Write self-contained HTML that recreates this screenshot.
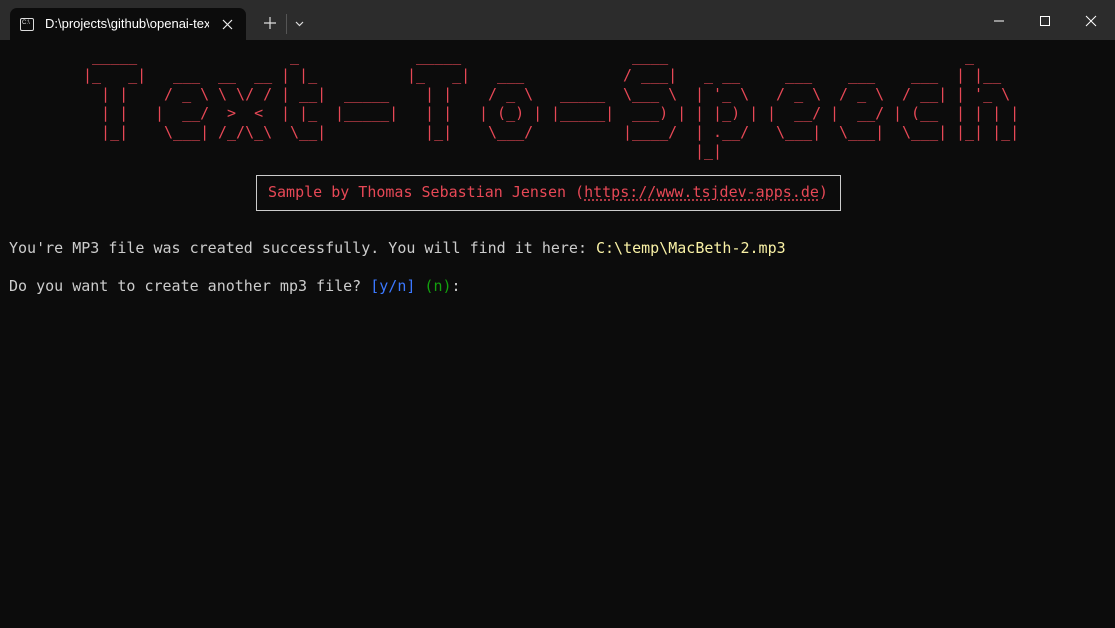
<!DOCTYPE html>
<html><head><meta charset="utf-8"><style>
body{margin:0;width:1115px;height:628px;background:#0c0c0c;overflow:hidden;position:relative;font-family:"Liberation Mono",monospace;}
.tb{position:absolute;left:0;top:0;width:1115px;height:40px;background:#2c2c2c;}
.tab{position:absolute;left:10px;top:8px;width:236px;height:32px;background:#0c0c0c;border-radius:7px 7px 0 0;}
.tab .t{position:absolute;left:35px;top:8px;font:13px "Liberation Sans",sans-serif;color:#fff;white-space:nowrap;width:164px;overflow:hidden;}
.ic{position:absolute;left:10px;top:10px;width:12px;height:11px;border:1px solid #ddd;border-radius:2px;}
.ic:after{content:"C:\\";position:absolute;left:1px;top:1px;font:6px "Liberation Sans";color:#ddd}
pre{margin:0;position:absolute;font-size:15px;line-height:19px;white-space:pre;}
.r{color:#e74856}
.a{color:#e74856;top:47px}
.g{color:#cccccc}
</style></head><body>
<div class="tb">
<div class="tab"><div class="ic"></div><div class="t">D:\projects\github\openai-text</div>
<svg style="position:absolute;left:212px;top:11px" width="11" height="11"><path d="M1 1L10 10M10 1L1 10" stroke="#eee" stroke-width="1.2"/></svg></div>
<svg style="position:absolute;left:264px;top:17px" width="12" height="12"><path d="M6 0V12M0 6H12" stroke="#ddd" stroke-width="1.2"/></svg>
<div style="position:absolute;left:286px;top:14px;width:1px;height:20px;background:#555"></div>
<svg style="position:absolute;left:295px;top:21px" width="9" height="6"><path d="M1 1L4.5 4.5L8 1" stroke="#ddd" fill="none" stroke-width="1.2"/></svg>
<svg style="position:absolute;left:993px;top:15px" width="12" height="12"><path d="M1 6H11" stroke="#fff"/></svg>
<svg style="position:absolute;left:1039px;top:15px" width="12" height="12"><rect x="1.5" y="1.5" width="9" height="9" stroke="#fff" fill="none"/></svg>
<svg style="position:absolute;left:1085px;top:15px" width="12" height="12"><path d="M1 1L11 11M11 1L1 11" stroke="#fff"/></svg>
</div>
<pre class="a" style="left:83px">
 _____
|_   _|
  | |
  | |
  |_|</pre>
<pre class="a" style="left:155px">

  ___
 / _ \
|  __/
 \___|</pre>
<pre class="a" style="left:218px">

__  __
\ \/ /
 &gt;  &lt;
/_/\_\</pre>
<pre class="a" style="left:281px">
 _
| |_
| __|
| |_
 \__|</pre>
<pre class="a" style="left:335px">


 _____
|_____|</pre>
<pre class="a" style="left:407px">
 _____
|_   _|
  | |
  | |
  |_|</pre>
<pre class="a" style="left:479px">

  ___
 / _ \
| (_) |
 \___/</pre>
<pre class="a" style="left:551px">


 _____
|_____|</pre>
<pre class="a" style="left:623px">
 ____
/ ___|
\___ \
 ___) |
|____/</pre>
<pre class="a" style="left:695px">

 _ __
| '_ \
| |_) |
| .__/
|_|</pre>
<pre class="a" style="left:767px">

  ___
 / _ \
|  __/
 \___|</pre>
<pre class="a" style="left:830px">

  ___
 / _ \
|  __/
 \___|</pre>
<pre class="a" style="left:893px">

  ___
 / __|
| (__
 \___|</pre>
<pre class="a" style="left:956px">
 _
| |__
| '_ \
| | | |
|_| |_|</pre>
<div style="position:absolute;left:256px;top:175px;width:583px;height:34px;border:1.5px solid #cccccc"></div>
<pre class="r" style="left:268px;top:183px">Sample by Thomas Sebastian Jensen (<span style="text-decoration:underline dotted;text-underline-offset:3px">https://www.tsjdev-apps.de</span>)</pre>
<pre class="g" style="left:9px;top:239px">You're MP3 file was created successfully. You will find it here: <span style="color:#f9f1a5">C:\temp\MacBeth-2.mp3</span></pre>
<pre class="g" style="left:9px;top:277px">Do you want to create another mp3 file? <span style="color:#3b78ff">[y/n]</span> <span style="color:#13a10e">(n)</span>:</pre>
</body></html>
